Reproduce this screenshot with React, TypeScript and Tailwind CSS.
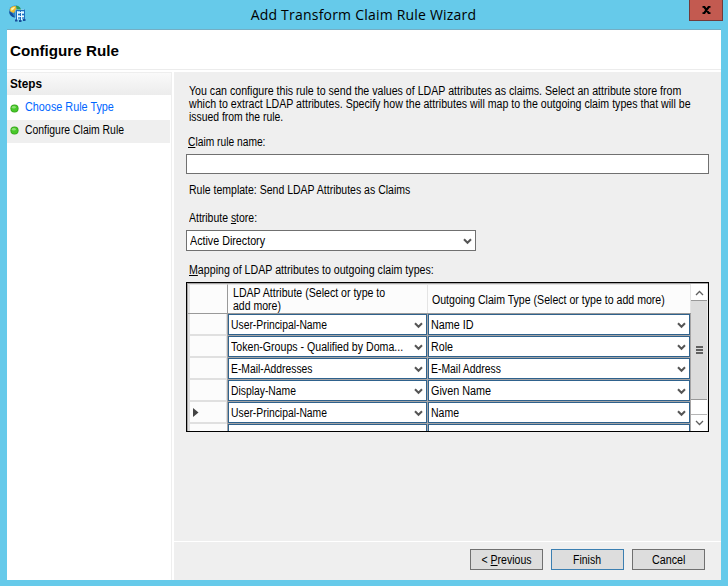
import type { ReactNode } from "react";

function T({ s = 0.88, children, className = "" }: { s?: number; children: ReactNode; className?: string }) {
  return (
    <span
      className={`block w-max origin-left whitespace-pre ${className}`}
      style={{ transform: `scaleX(${s})` }}
    >
      {children}
    </span>
  );
}

function Arrow() {
  return (
    <svg width="9" height="7" viewBox="0 0 9 7" className="shrink-0" fill="none" stroke="#555" strokeWidth="2">
      <path d="M1 1.200 4.500 4.800 8 1.200" />
    </svg>
  );
}

function Dot() {
  return (
    <svg width="9" height="9" viewBox="0 0 9 9" className="mt-px shrink-0">
      <circle cx="4.500" cy="4.500" r="4.100" fill="#35a51b" />
      <circle cx="4.500" cy="4.500" r="3.200" fill="#48c829" />
      <ellipse cx="3.800" cy="3.200" rx="2" ry="1.300" fill="#8de075" />
    </svg>
  );
}

function AppIcon() {
  return (
    <svg width="17" height="18" viewBox="0 0 17 18" className="mt-[5px] shrink-0">
      <circle cx="6" cy="6.500" r="6" fill="#2c86c4" />
      <path d="M0.500 5Q2 0.500 6.500 1L8 3 6 6 5 8 2 7Z" fill="#f0b92a" />
      <path d="M2 3.500Q4 1.500 6 2L5 4 2.500 6Z" fill="#fff2a8" />
      <path d="M7 0.600Q11.500 1.500 12 5L8 5Z" fill="#2d9a55" />
      <path d="M0.200 6.500 3 8 6 12.500Q1 12 0.200 6.500Z" fill="#154a9a" />
      <rect x="6.500" y="4.500" width="9.500" height="10" fill="#9bd3f2" />
      <path d="M7.500 5.500V16M11.500 5.500V16M15.500 4.500V15M7 5.500H16M7 9.500H16M7 13H15" fill="none" stroke="#1f6fc0" strokeWidth="1" />
      <path d="M8.500 6.500V15M12.500 6.500V15M8 7.500H15M8 11.500H15" fill="none" stroke="#e9f7ff" strokeWidth="1" />
      <path d="M6 15.500H8.500M10 16H12.500M14 15H16.500" stroke="#174f9c" strokeWidth="2" />
    </svg>
  );
}

const rows: { a: string; as: number; b: string; bs: number; current?: boolean }[] = [
  { a: "User-Principal-Name", as: 0.862, b: "Name ID", bs: 0.9 },
  { a: "Token-Groups - Qualified by Doma...", as: 0.884, b: "Role", bs: 0.89 },
  { a: "E-Mail-Addresses", as: 0.861, b: "E-Mail Address", bs: 0.866 },
  { a: "Display-Name", as: 0.862, b: "Given Name", bs: 0.9 },
  { a: "User-Principal-Name", as: 0.862, b: "Name", bs: 0.875, current: true },
];

function Cell({ text, s, className }: { text: string; s: number; className: string }) {
  return (
    <div className={`flex h-[21px] shrink-0 items-center border border-[#2f628d] bg-white pl-[2px] pr-[3px] pt-px ${className}`}>
      <div className="min-w-0 flex-1">
        <T s={s}>{text}</T>
      </div>
      <Arrow />
    </div>
  );
}

function Button({ children, s, primary }: { children: ReactNode; s: number; primary?: boolean }) {
  return (
    <button className={`flex h-[21px] w-[73px] items-center justify-center border bg-[#dddddd] pt-[2px] ${primary ? "border-[#3c7fb1]" : "border-[#707070]"}`}>
      <T s={s} className="!origin-center">{children}</T>
    </button>
  );
}

export default function App() {
  return (
    <div className="flex h-[586px] w-[728px] flex-col overflow-hidden bg-[#66caea] font-['Liberation_Sans',Arial,sans-serif] text-[12px] leading-[13px] text-black">
      <header className="flex h-[29px] shrink-0 items-start pl-[9px] pr-[5px]">
        <AppIcon />
        <h1 className="grow pl-3 pt-[5px] text-center font-['Open_Sans',sans-serif] text-[14px] leading-5 tracking-[0.21px]">
          Add Transform Claim Rule Wizard
        </h1>
        <button className="flex h-[21px] w-[34px] items-center justify-center border border-t-0 border-[#713a3a] bg-[#c35a50]">
          <svg width="9" height="8" viewBox="0 0 9 8" fill="none" stroke="#000" strokeWidth="2.200">
            <path d="M0.500 0.600H2L7 7.400H8.500M8.500 0.600H7L2 7.400H0.500" />
          </svg>
        </button>
      </header>
      <div className="mx-[7px] flex h-[551px] w-[714px] flex-col border-t border-[#74aec4] bg-white">
        <div className="mb-[2px] flex h-10 shrink-0 items-center border-b border-[#ececec] pl-[3px] pt-[3px]">
          <h2 className="text-[14px] font-bold leading-4">
            <T s={1.085}>Configure Rule</T>
          </h2>
        </div>
        <div className="flex grow">
          <aside className="mr-[2px] flex w-[165px] shrink-0 flex-col border-r border-t border-[#eeeeee]">
            <div className="flex h-[22px] items-center bg-linear-to-b from-[#fafafa] to-[#ececec] pl-[3px] pt-px font-bold">
              <T s={0.98}>Steps</T>
            </div>
            <div className="flex h-[25px] items-center gap-[6px] pl-[3px] text-[#0066ff]">
              <Dot />
              <T s={0.902}>Choose Rule Type</T>
            </div>
            <div className="mr-px flex h-[23px] items-center gap-[6px] bg-[#efefef] pb-[3px] pl-[3px]">
              <Dot />
              <T s={0.868}>Configure Claim Rule</T>
            </div>
          </aside>
          <main className="flex w-[547px] flex-col bg-[#efefef]">
            <section className="flex h-[470px] flex-col border-b border-white px-3">
              <div className="pl-[3px] pt-[13px]">
                <T s={0.885}>You can configure this rule to send the values of LDAP attributes as claims. Select an attribute store from</T>
                <T s={0.884}>which to extract LDAP attributes. Specify how the attributes will map to the outgoing claim types that will be</T>
                <T s={0.866}>issued from the rule.</T>
              </div>
              <label className="mt-3 pl-[2px]">
                <T s={0.854}><u>C</u>laim rule name:</T>
              </label>
              <input className="mt-[5px] h-5 w-[523px] shrink-0 border border-[#707070] bg-white" />
              <div className="mt-[10px] pl-[3px]">
                <T s={0.876}>Rule template: Send LDAP Attributes as Claims</T>
              </div>
              <label className="mt-[15px] pl-[3px]">
                <T s={0.872}>Attribute <u>s</u>tore:</T>
              </label>
              <div className="mt-[5px] flex h-[21px] w-[290px] shrink-0 items-center justify-between border border-[#707070] bg-white pl-[3px] pr-[3px] pt-px">
                <T s={0.893}>Active Directory</T>
                <Arrow />
              </div>
              <div className="mt-[13px] pl-[3px]">
                <T s={0.887}><u>M</u>apping of LDAP attributes to outgoing claim types:</T>
              </div>
              <div className="mt-[5px] flex h-[150px] w-[523px] shrink-0 overflow-hidden border border-black bg-[#a7a5a5] pl-px pt-px">
                <div className="flex w-[503px] shrink-0 flex-col">
                  <div className="flex h-[30px] shrink-0 border-b border-[#999]">
                    <div className="w-10 shrink-0 border-l-2 border-r border-t border-l-[#e4e4e4] border-r-[#999] border-t-[#e4e4e4] bg-[#fcfcfc]" />
                    <div className="w-[200px] shrink-0 border-r border-t border-[#e4e4e4] bg-[#fcfcfc] pl-[5px] pt-[2px]">
                      <T s={0.882}>LDAP Attribute (Select or type to</T>
                      <T s={0.877}>add more)</T>
                    </div>
                    <div className="flex min-w-0 flex-1 items-center border-r border-t border-[#e4e4e4] bg-[#fcfcfc] pl-1 pt-[2px]">
                      <T s={0.882}>Outgoing Claim Type (Select or type to add more)</T>
                    </div>
                  </div>
                  {rows.map((r, i) => (
                    <div key={i} className="flex h-[22px] shrink-0">
                      <div className="mr-px flex w-[39px] shrink-0 items-center border-b-2 border-l-2 border-r border-[#e0e0e0] bg-[#fcfcfc] pl-[3px]">
                        {r.current && (
                          <svg width="6" height="9" viewBox="0 0 6 9">
                            <path d="M0 0 5.500 4.500 0 9Z" fill="#444" />
                          </svg>
                        )}
                      </div>
                      <Cell text={r.a} s={r.as} className="mr-px w-[199px]" />
                      <Cell text={r.b} s={r.bs} className="w-[262px]" />
                    </div>
                  ))}
                  <div className="flex h-[7px] shrink-0">
                    <div className="mr-px w-[39px] shrink-0 border-l-2 border-[#e0e0e0] bg-[#fcfcfc]" />
                    <div className="mr-px w-[199px] shrink-0 border border-b-0 border-[#2f628d] bg-white" />
                    <div className="w-[262px] shrink-0 border border-b-0 border-[#2f628d] bg-white" />
                  </div>
                </div>
                <div className="flex w-[17px] shrink-0 flex-col border-r border-[#ececec] bg-white">
                  <div className="flex h-4 shrink-0 items-center justify-center pt-px">
                    <svg width="9" height="6" viewBox="0 0 9 6" fill="none" stroke="#606060" strokeWidth="1.300">
                      <path d="M1 5 4.500 1.500 8 5" />
                    </svg>
                  </div>
                  <div className="flex h-[100px] shrink-0 flex-col items-center justify-center gap-px border-y border-[#999] bg-[#dcdcdc]">
                    <div className="h-[2px] w-[7px] bg-[#606060]" />
                    <div className="h-[2px] w-[7px] bg-[#606060]" />
                    <div className="h-[2px] w-[7px] bg-[#606060]" />
                  </div>
                  <div className="h-[15px] shrink-0 border-b border-[#b5b5b5]" />
                  <div className="flex grow items-center justify-center">
                    <svg width="9" height="6" viewBox="0 0 9 6" fill="none" stroke="#606060" strokeWidth="1.300">
                      <path d="M1 1 4.500 4.500 8 1" />
                    </svg>
                  </div>
                </div>
              </div>
            </section>
            <footer className="flex justify-end gap-2 pr-4 pt-[7px]">
              <Button s={0.877}>&lt; <u>P</u>revious</Button>
              <Button s={0.875} primary>Finish</Button>
              <Button s={0.896}>Cancel</Button>
            </footer>
          </main>
        </div>
      </div>
    </div>
  );
}
